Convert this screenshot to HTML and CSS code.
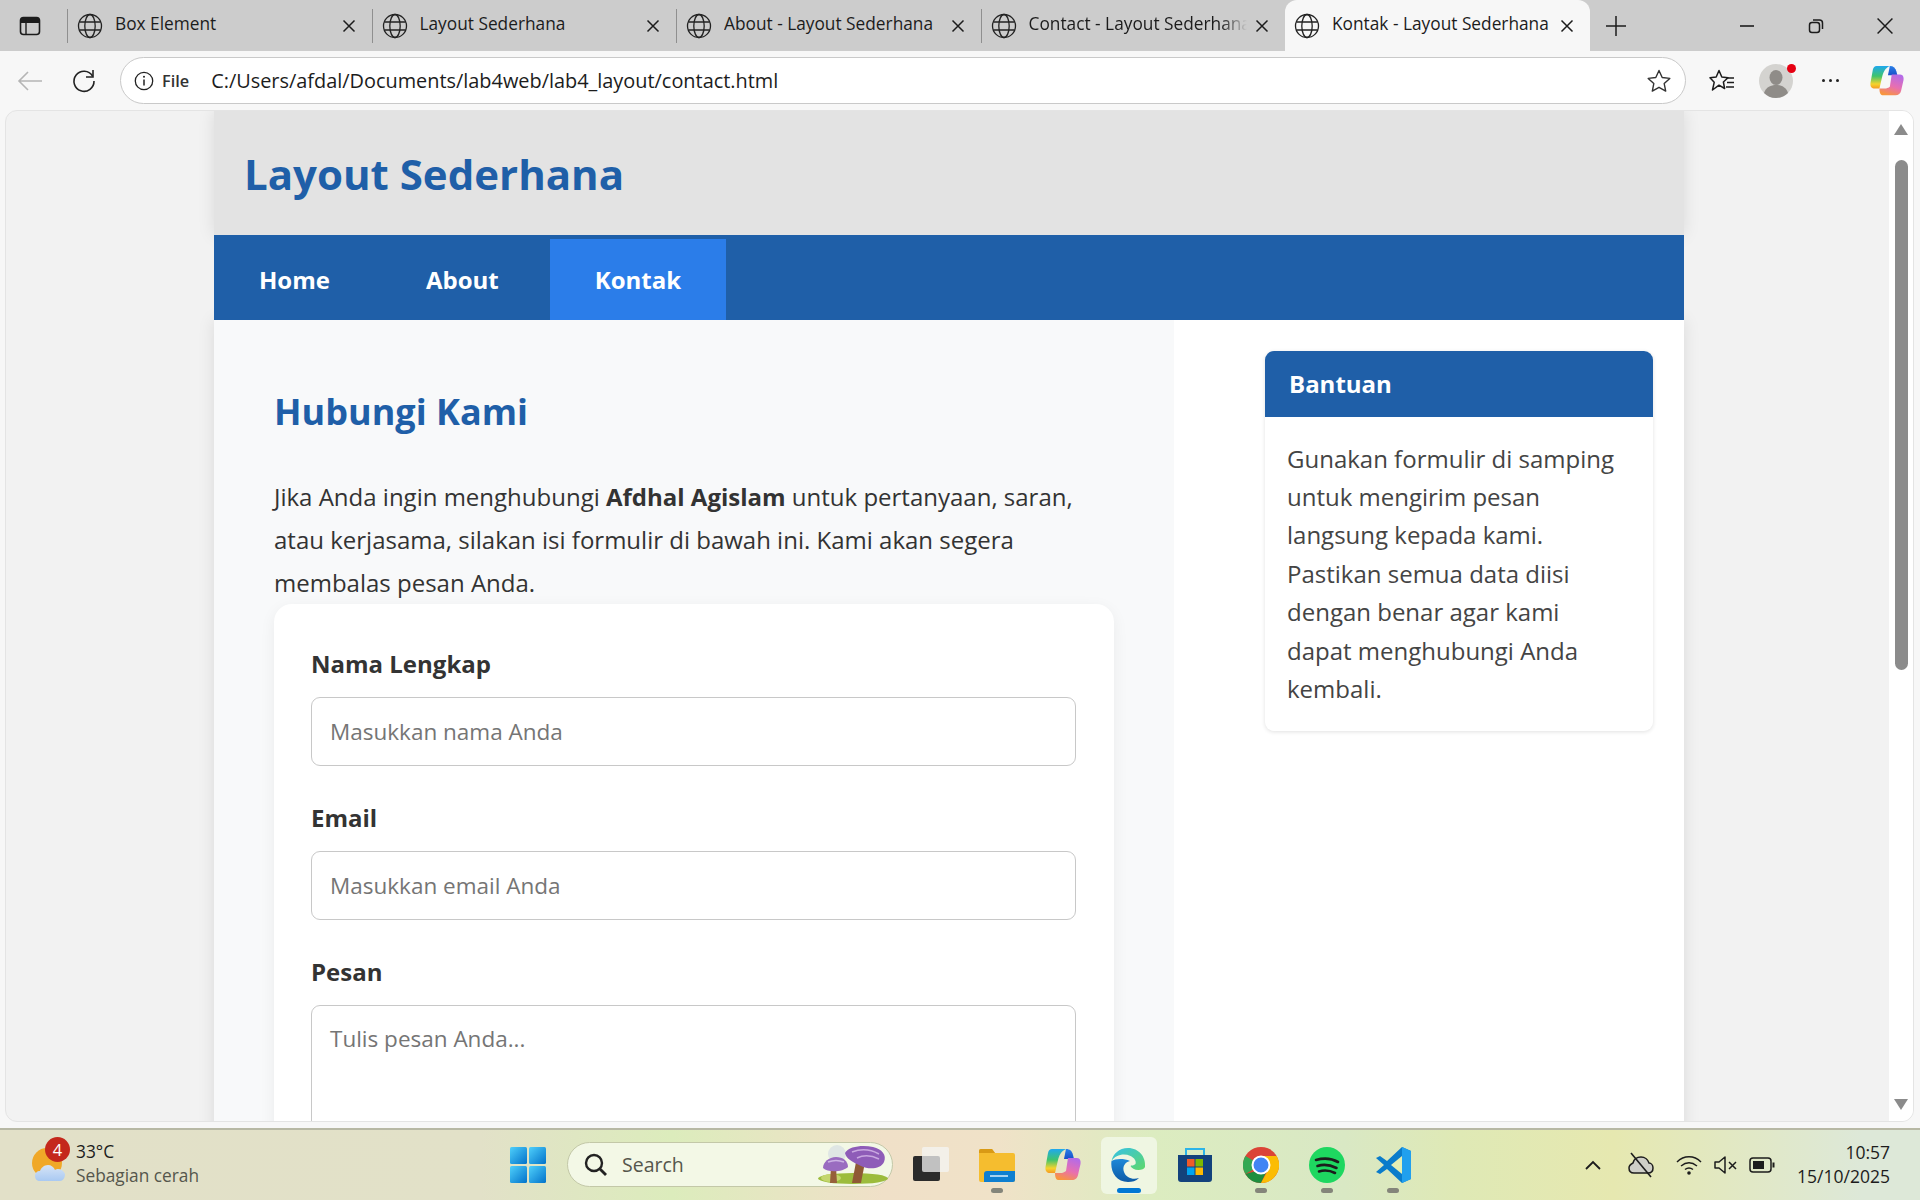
FILE: index.html
```html
<!DOCTYPE html>
<html lang="id">
<head>
    <meta charset="UTF-8">
    <title>Kontak - Layout Sederhana</title>
    <link rel="stylesheet" href="styles.css">
</head>
<body>
    <svg class="defs" width="0" height="0">
        <defs>
            <symbol id="globe" viewBox="0 0 26 26">
                <g fill="none" stroke="#222" stroke-width="1.3">
                    <circle cx="13" cy="13" r="11.5"/>
                    <ellipse cx="13" cy="13" rx="5.2" ry="11.5"/>
                    <path d="M2.4 9h21.2M2.4 17h21.2"/>
                </g>
            </symbol>
            <symbol id="cross" viewBox="0 0 14 14">
                <path d="M1.5 1.5l11 11M12.5 1.5l-11 11" fill="none" stroke="#1c1c1c" stroke-width="1.5"/>
            </symbol>
            <linearGradient id="copilotL" x1="0" y1="0" x2="0" y2="1">
                <stop offset="0" stop-color="#1fa8f0"/>
                <stop offset="0.45" stop-color="#3ec46d"/>
                <stop offset="0.8" stop-color="#f6d32d"/>
                <stop offset="1" stop-color="#f59a23"/>
            </linearGradient>
            <linearGradient id="copilotT" x1="0" y1="0" x2="0" y2="1">
                <stop offset="0" stop-color="#2a80e8"/>
                <stop offset="1" stop-color="#1a4fc8"/>
            </linearGradient>
            <linearGradient id="copilotR" x1="0.7" y1="0" x2="0.3" y2="1">
                <stop offset="0" stop-color="#b46be8"/>
                <stop offset="0.55" stop-color="#e86fb0"/>
                <stop offset="1" stop-color="#f8963c"/>
            </linearGradient>
            <linearGradient id="edgeA" x1="0" y1="0" x2="1" y2="1">
                <stop offset="0" stop-color="#35c1e8"/>
                <stop offset="1" stop-color="#5fd86a"/>
            </linearGradient>
            <linearGradient id="edgeB" x1="0" y1="0" x2="0" y2="1">
                <stop offset="0" stop-color="#1e88d8"/>
                <stop offset="1" stop-color="#0c5aa6"/>
            </linearGradient>
            <linearGradient id="startG" x1="0" y1="0" x2="1" y2="1">
                <stop offset="0" stop-color="#4fd0fb"/>
                <stop offset="1" stop-color="#0272ca"/>
            </linearGradient>
            <linearGradient id="cloudG" x1="0" y1="0" x2="0" y2="1">
                <stop offset="0" stop-color="#d6e4f6"/>
                <stop offset="1" stop-color="#a9c9f2"/>
            </linearGradient>
            <symbol id="copilot" viewBox="0 0 36 36">
                <path d="M21 2c4 0 6 2 7 6l1 4H19l2-10z" fill="url(#copilotT)"/>
                <path d="M7 2h14c-5 2-7 7-8 11l-3 13H5c-3 0-5-2-4.500-6L3 6c.5-2.500 2-4 4-4z" fill="url(#copilotL)"/>
                <path d="M23 11h9c3 0 4 3 3.500 6L33 28c-.5 3-3 5-6 5H13c-2 0-3-3-3-7h7c2-1 3-1 4-2z" fill="url(#copilotR)"/>
            </symbol>
        </defs>
    </svg>

    <div class="window">
        <div class="tabstrip">
            <div class="panel-btn">
                <svg width="22" height="22" viewBox="0 0 22 22"><rect x="1.5" y="2.5" width="19" height="17" rx="3" fill="none" stroke="#1c1c1c" stroke-width="1.6"/><path d="M2 3h18v5H2z" fill="#1c1c1c"/><path d="M7 8v11" stroke="#1c1c1c" stroke-width="1.4"/></svg>
            </div>
            <div class="tab"><svg class="globe"><use href="#globe"/></svg><span class="tab-title">Box Element</span><svg class="tab-x"><use href="#cross"/></svg></div>
            <div class="tab"><svg class="globe"><use href="#globe"/></svg><span class="tab-title">Layout Sederhana</span><svg class="tab-x"><use href="#cross"/></svg></div>
            <div class="tab"><svg class="globe"><use href="#globe"/></svg><span class="tab-title">About - Layout Sederhana</span><svg class="tab-x"><use href="#cross"/></svg></div>
            <div class="tab"><svg class="globe"><use href="#globe"/></svg><span class="tab-title tab-fade">Contact - Layout Sederhana</span><svg class="tab-x"><use href="#cross"/></svg></div>
            <div class="tab tab-active"><svg class="globe"><use href="#globe"/></svg><span class="tab-title">Kontak - Layout Sederhana</span><svg class="tab-x"><use href="#cross"/></svg></div>
            <svg class="new-tab" width="22" height="22" viewBox="0 0 22 22"><path d="M11 1v20M1 11h20" stroke="#1c1c1c" stroke-width="1.5"/></svg>
            <div class="win-btns">
                <svg width="16" height="16" viewBox="0 0 16 16"><path d="M1 8h14" stroke="#1c1c1c" stroke-width="1.6"/></svg>
                <svg width="16" height="16" viewBox="0 0 16 16"><rect x="1.5" y="4.5" width="10" height="10" rx="2.5" fill="none" stroke="#1c1c1c" stroke-width="1.5"/><path d="M5 2h6.5A3 3 0 0 1 14.500 5v6" fill="none" stroke="#1c1c1c" stroke-width="1.5"/></svg>
                <svg width="16" height="16" viewBox="0 0 14 14"><path d="M.5.5l13 13M13.500.5l-13 13" stroke="#1c1c1c" stroke-width="1.3"/></svg>
            </div>
        </div>

        <div class="toolbar">
            <svg width="28" height="24" viewBox="0 0 28 24"><path d="M26 12H3M12 3l-9 9 9 9" fill="none" stroke="#b5b5b5" stroke-width="1.6"/></svg>
            <svg class="reload" width="26" height="26" viewBox="0 0 26 26"><path d="M21.500 8A10 10 0 1 0 23 13" fill="none" stroke="#222" stroke-width="1.6"/><path d="M22 2v7h-7" fill="none" stroke="#222" stroke-width="1.6"/></svg>
            <div class="addressbar">
                <svg width="20" height="20" viewBox="0 0 20 20"><circle cx="10" cy="10" r="8.7" fill="none" stroke="#222" stroke-width="1.3"/><path d="M10 8.500v6" stroke="#222" stroke-width="1.5"/><circle cx="10" cy="5.800" r="1" fill="#222"/></svg>
                <span class="addr-file">File</span>
                <span class="addr-url">C:/Users/afdal/Documents/lab4web/lab4_layout/contact.html</span>
                <svg class="addr-star" width="26" height="26" viewBox="0 0 26 26"><path d="M13 2.500l3.200 7 7.600.9-5.600 5.200 1.500 7.500-6.700-3.800-6.700 3.800 1.500-7.500-5.600-5.200 7.600-.9z" fill="none" stroke="#333" stroke-width="1.4" stroke-linejoin="round"/></svg>
            </div>
            <svg class="tool-fav" width="26" height="26" viewBox="0 0 26 26"><path d="M10 2.500l2.800 6.500 6.200.7-4.600 4.300 1.200 6.500L10 17.200 3.500 22l1.700-7.700L1 9.700 7.200 9z" fill="none" stroke="#1c1c1c" stroke-width="1.500" stroke-linejoin="round"/><path d="M17 10h8M18 14.500h7M17 19h8" stroke="#1c1c1c" stroke-width="1.400"/></svg>
            <div class="avatar">
                <svg width="34" height="34" viewBox="0 0 34 34"><circle cx="17" cy="17" r="17" fill="#d4d3d0"/><ellipse cx="17" cy="13.500" rx="6.500" ry="7.500" fill="#8f8c88"/><path d="M5 29c2-6 7-8 12-8s10 2 12 8c-3 3-7 5-12 5s-9-2-12-5z" fill="#8f8c88"/></svg>
                <span class="avatar-dot"></span>
            </div>
            <div class="tool-dots"><i></i><i></i><i></i></div>
            <svg class="tool-copilot"><use href="#copilot"/></svg>
        </div>

        <div class="content">
            <div class="viewport">
                <div class="page">
                    <header class="site-header"><h1>Layout Sederhana</h1></header>
                    <nav class="site-nav">
                        <a href="#">Home</a>
                        <a href="#">About</a>
                        <a href="#" class="active">Kontak</a>
                    </nav>
                    <div class="columns">
                        <main class="main">
                            <h2>Hubungi Kami</h2>
                            <p>Jika Anda ingin menghubungi <strong>Afdhal Agislam</strong> untuk pertanyaan, saran, atau kerjasama, silakan isi formulir di bawah ini. Kami akan segera membalas pesan Anda.</p>
                            <form class="contact-form">
                                <label for="nama">Nama Lengkap</label>
                                <input id="nama" type="text" placeholder="Masukkan nama Anda">
                                <label for="email">Email</label>
                                <input id="email" type="email" placeholder="Masukkan email Anda">
                                <label for="pesan">Pesan</label>
                                <textarea id="pesan" placeholder="Tulis pesan Anda..."></textarea>
                            </form>
                        </main>
                        <aside class="sidebar">
                            <div class="help-card">
                                <h3>Bantuan</h3>
                                <p>Gunakan formulir di samping untuk mengirim pesan langsung kepada kami. Pastikan semua data diisi dengan benar agar kami dapat menghubungi Anda kembali.</p>
                            </div>
                        </aside>
                    </div>
                </div>
                <div class="scrollbar">
                    <span class="arrow-up"></span>
                    <span class="thumb"></span>
                    <span class="arrow-down"></span>
                </div>
            </div>
        </div>

        <div class="taskbar">
            <div class="weather">
                <div class="weather-icon">
                    <svg width="38" height="42" viewBox="0 0 38 42"><circle cx="17" cy="16" r="15" fill="#f0a828"/><path d="M10 34c-3 0-5-2-5-5s2-5 5-5c1-3 4-6 8-6 3 0 6 2 7 5 1-1 2-1 3-1 3 0 6 2 7 5 0 4-2 7-5 7z" fill="url(#cloudG)"/></svg>
                    <span class="weather-badge">4</span>
                </div>
                <div class="weather-text">
                    <span class="temp">33°C</span>
                    <span class="cond">Sebagian cerah</span>
                </div>
            </div>

            <div class="task-item">
                <svg width="36" height="36" viewBox="0 0 36 36"><rect x="0" y="0" width="17" height="17" rx="1.500" fill="url(#startG)"/><rect x="19" y="0" width="17" height="17" rx="1.500" fill="url(#startG)"/><rect x="0" y="19" width="17" height="17" rx="1.500" fill="url(#startG)"/><rect x="19" y="19" width="17" height="17" rx="1.500" fill="url(#startG)"/></svg>
            </div>
            <div class="search">
                <svg width="24" height="24" viewBox="0 0 24 24"><circle cx="10" cy="10" r="8" fill="none" stroke="#222" stroke-width="2.400"/><path d="M15.500 15.500l6.500 6.500" stroke="#222" stroke-width="2.800"/></svg>
                <span>Search</span>
                <svg class="mushrooms" width="71" height="39" viewBox="0 0 71 39">
                    <circle cx="20" cy="9" r="9" fill="#dfe6e4"/>
                    <ellipse cx="36" cy="33.500" rx="35" ry="5.500" fill="#9cbc3c"/>
                    <ellipse cx="14" cy="33" rx="10" ry="4" fill="#c4d66c"/>
                    <path d="M14 22h5l1 16h-7z" fill="#96603a"/>
                    <path d="M39 17h9l-4 21h-9z" fill="#8f5a34"/>
                    <path d="M6 23c0-6 6-11 13-11s12 4 12 10c-5 5-20 6-25 1z" fill="#9a6cc0"/>
                    <path d="M11 17c5-2 11-2 16 0" fill="none" stroke="#cdb4e4" stroke-width="1.500"/>
                    <path d="M28 8C32 1 46 0 56 2c9 2 14 8 11 15-3 7-15 8-23 4-8-4-15-7-16-13z" fill="#8e5cb8"/>
                    <path d="M35 7c8-3 18-3 27 2M40 13c6-3 14-3 22 1" fill="none" stroke="#c9a8e0" stroke-width="1.500"/>
                </svg>
            </div>
            <div class="task-item">
                <svg width="36" height="36" viewBox="0 0 36 36"><rect x="0" y="9" width="27" height="25" rx="2" fill="#2b2b2b"/><rect x="9" y="0" width="27" height="25" rx="2" fill="#f4f4f4" fill-opacity=".75"/></svg>
            </div>
            <div class="task-item task-dot">
                <svg width="36" height="34" viewBox="0 0 36 34"><path d="M0 3a2 2 0 0 1 2-2h11l3 4h18a2 2 0 0 1 2 2v25a2 2 0 0 1-2 2H2a2 2 0 0 1-2-2z" fill="#f5bd2f"/><path d="M0 3a2 2 0 0 1 2-2h11l3 4H0z" fill="#d99a15"/><path d="M5 26a3 3 0 0 1 3-3h28v9a2 2 0 0 1-2 2H5z" fill="#0f7fd0"/><path d="M11 28h18" stroke="#d8ecfb" stroke-width="1.500"/></svg>
            </div>
            <div class="task-item"><svg class="task-copilot"><use href="#copilot"/></svg></div>
            <div class="task-item task-hover">
                <svg width="36" height="36" viewBox="0 0 36 36"><path d="M34 20c1-10-6-19-17-19C8 1 2 7 .5 14c4-6 12-8 19-5 4 2 6 5 5 8-2 2-4 1-5 2 1 2 4 4 8 4 3 0 6-1 6.500-3z" fill="url(#edgeA)"/><path d="M.5 14C-1 24 5 35 17 35c4 0 8-1 11-4-6 2-13 0-15-6-2-5 1-10 6-11-7-3-15-2-18.500 0z" fill="url(#edgeB)"/></svg>
                <span class="task-indicator"></span>
            </div>
            <div class="task-item">
                <svg width="36" height="36" viewBox="0 0 36 36"><path d="M9 8V2h18v6" fill="none" stroke="#2cb4e8" stroke-width="2"/><path d="M1 8h34v24a3 3 0 0 1-3 3H4a3 3 0 0 1-3-3z" fill="#13427c"/><rect x="10" y="12" width="7.500" height="7.500" fill="#f05a28"/><rect x="18.500" y="12" width="7.500" height="7.500" fill="#7fb900"/><rect x="10" y="20.500" width="7.500" height="7.500" fill="#02a4ef"/><rect x="18.500" y="20.500" width="7.500" height="7.500" fill="#ffb901"/></svg>
            </div>
            <div class="task-item task-dot">
                <svg width="36" height="36" viewBox="0 0 36 36"><circle cx="18" cy="18" r="18" fill="#db4437"/><path d="M18 18L2.400 27A18 18 0 0 1 2.400 9z" fill="#34a853"/><path d="M2.400 27A18 18 0 0 0 18 36l7-15z" fill="#1e8e3e"/><path d="M18 9h15.600A18 18 0 0 1 18 36l7-13z" fill="#fbbc04"/><circle cx="18" cy="18" r="8.500" fill="#4285f4" stroke="#fff" stroke-width="2"/></svg>
            </div>
            <div class="task-item task-dot">
                <svg width="36" height="36" viewBox="0 0 36 36"><circle cx="18" cy="18" r="18" fill="#1ed760"/><path d="M7 13c7-2 15-2 22 2M8.500 19c6-2 13-1 19 2M10 24.500c5-1.500 11-1 16 1.500" fill="none" stroke="#1c1c1c" stroke-width="2.600" stroke-linecap="round"/></svg>
            </div>
            <div class="task-item task-dot">
                <svg width="36" height="36" viewBox="0 0 36 36"><path d="M27 0l9 4v28l-9 4-15-14-7 5-4-2 8-7-8-7 4-2 7 5z" fill="#0a7ccb"/><path d="M27 0l9 4v28l-9 4z" fill="#21a0ee"/><path d="M27 9L16 18l11 9z" fill="#e4efb4"/></svg>
            </div>

            <div class="tray">
                <svg width="16" height="10" viewBox="0 0 16 10"><path d="M1 9l7-7 7 7" fill="none" stroke="#1c1c1c" stroke-width="1.800"/></svg>
                <svg class="tray-cloud" width="26" height="26" viewBox="0 0 26 26"><path d="M6 21c-3 0-5-2-5-5s2-4 4-5c1-4 4-6 8-6s7 3 8 6c2 0 4 2 4 5s-2 5-5 5z" fill="#cfcfc8" stroke="#1c1c1c" stroke-width="1.500"/><path d="M3 1l20 24" stroke="#1c1c1c" stroke-width="1.600"/></svg>
                <svg class="tray-wifi" width="26" height="20" viewBox="0 0 26 20"><path d="M1 7c7-7 17-7 24 0M5 11c5-4 11-4 16 0M9 14.500c2.500-2 5.500-2 8 0" fill="none" stroke="#1c1c1c" stroke-width="1.500"/><circle cx="13" cy="18" r="1.800" fill="#1c1c1c"/></svg>
                <svg class="tray-vol" width="24" height="20" viewBox="0 0 24 20"><path d="M1 7h4l6-5v16l-6-5H1z" fill="none" stroke="#1c1c1c" stroke-width="1.500" stroke-linejoin="round"/><path d="M15 7l7 7M22 7l-7 7" stroke="#1c1c1c" stroke-width="1.500"/></svg>
                <svg class="tray-bat" width="26" height="18" viewBox="0 0 26 18"><rect x="1" y="2" width="21" height="14" rx="3" fill="none" stroke="#1c1c1c" stroke-width="1.500"/><rect x="4" y="5" width="11" height="8" fill="#1c1c1c"/><path d="M23.500 6.500h2v5h-2z" fill="#1c1c1c"/></svg>
                <div class="clock"><span>10:57</span><span>15/10/2025</span></div>
            </div>
        </div>
    </div>
</body>
</html>
```

FILE: styles.css
```css
*{
    box-sizing: border-box;
    margin: 0px;
    padding: 0px;
}
body{
    width: 1920px;
    height: 1200px;
    overflow: hidden;
    font-family: "Open Sans", "Noto Sans", sans-serif;
    color: #333;
}
.defs{
    position: absolute;
}
.window{
    display: flex;
    flex-direction: column;
    height: 1200px;
    background: #f7f7f7;
}

/* tabs */
.tabstrip{
    display: flex;
    align-items: center;
    height: 51px;
    background: #cccccc;
    color: #1c1c1c;
}
.panel-btn{
    display: flex;
    justify-content: center;
    width: 60px;
    margin-right: 7px;
}
.tab{
    display: flex;
    align-items: center;
    width: 304.500px;
    height: 34px;
    padding: 0 16px 0 9px;
    border-left: 1px solid #8f8f8f;
    font-size: 17.300px;
}
.globe{
    flex: none;
    width: 26px;
    height: 26px;
    margin-right: 12px;
}
.tab-title{
    flex: 1;
    margin-top: -4px;
    overflow: hidden;
    white-space: nowrap;
}
.tab-fade{
    -webkit-mask-image: linear-gradient(to right, #000 88%, transparent 100%);
    mask-image: linear-gradient(to right, #000 88%, transparent 100%);
}
.tab-x{
    flex: none;
    width: 14px;
    height: 14px;
    margin-left: 8px;
}
.tab-active{
    height: 51px;
    background: #f7f7f7;
    border-left: none;
    border-radius: 12px 12px 0 0;
}
.new-tab{
    margin-left: 15px;
}
.win-btns{
    display: flex;
    justify-content: space-between;
    width: 154px;
    margin-left: auto;
    margin-right: 27px;
}

/* address bar row */
.toolbar{
    display: flex;
    align-items: center;
    height: 59px;
    padding-left: 16px;
    background: #f7f7f7;
}
.reload{
    margin-left: 27px;
}
.addressbar{
    display: flex;
    align-items: center;
    width: 1566px;
    height: 47px;
    margin-left: 23px;
    padding: 0 13px;
    background: #fff;
    border: 1px solid #c9c9c9;
    border-radius: 24px;
    font-size: 19.900px;
}
.addr-file{
    margin-left: 8px;
    font-size: 16.300px;
    font-weight: 600;
}
.addr-url{
    margin-left: 22px;
    color: #1c1c1c;
}
.addr-star{
    margin-left: auto;
}
.tool-fav{
    margin-left: 23px;
}
.avatar{
    position: relative;
    width: 34px;
    height: 34px;
    margin-left: 24px;
}
.avatar-dot{
    position: absolute;
    top: 0px;
    right: -3px;
    width: 9px;
    height: 9px;
    background: #e60012;
    border-radius: 50%;
}
.tool-dots{
    display: flex;
    gap: 4px;
    margin-left: 29px;
}
.tool-dots i{
    width: 3px;
    height: 3px;
    background: #222;
    border-radius: 50%;
}
.tool-copilot{
    width: 34px;
    height: 34px;
    margin-left: 31px;
}

/* browser viewport */
.content{
    height: 1018px;
    padding: 0 6px 6px 5px;
}
.viewport{
    display: flex;
    height: 1012px;
    overflow: hidden;
    background: #f2f2f2;
    border: 1px solid #e4e4e4;
    border-radius: 12px;
}
.page{
    flex: 1;
    height: 1012px;
    overflow: hidden;
}
.scrollbar{
    display: flex;
    flex-direction: column;
    align-items: center;
    width: 24px;
    background: #fff;
}
.arrow-up, .arrow-down{
    width: 0px;
    height: 0px;
    border-left: 7px solid transparent;
    border-right: 7px solid transparent;
}
.arrow-up{
    margin-top: 13px;
    border-bottom: 11px solid #8b8b8b;
}
.arrow-down{
    margin-top: auto;
    margin-bottom: 11px;
    border-top: 11px solid #8b8b8b;
}
.thumb{
    width: 13px;
    height: 510px;
    margin-top: 25px;
    background: #8b8b8b;
    border-radius: 7px;
}

/* the page itself */
.site-header, .site-nav, .columns{
    width: 1470px;
    margin-left: 208px;
}
.site-header{
    height: 124px;
    padding: 35px 30px 0;
    background: #e3e3e3;
    box-shadow: 0 0 16px rgba(0,0,0,0.1);
}
.site-header h1{
    font-size: 42px;
    line-height: 56px;
    font-weight: 700;
    color: #1f5fa8;
}
.site-nav{
    display: flex;
    align-items: flex-end;
    gap: 6px;
    height: 85px;
    background: #1f5fa8;
    position: relative;
}
.site-nav a{
    display: flex;
    align-items: center;
    justify-content: center;
    height: 81px;
    padding: 0 45px;
    font-size: 24px;
    font-weight: 700;
    color: #fff;
    text-decoration: none;
}
.site-nav a.active{
    background: #2b7de9;
}
.columns{
    display: flex;
    background: #fff;
    height: 900px;
    box-shadow: 0 0 16px rgba(0,0,0,0.1);
}
.main{
    width: 960px;
    padding: 68px 60px 0;
    background: #f8f9fa;
}
.main h2{
    font-size: 36px;
    line-height: 48px;
    font-weight: 700;
    color: #1f5fa8;
}
.main p{
    margin-top: 39px;
    font-size: 24px;
    line-height: 43px;
    color: #333;
}
.contact-form{
    display: flex;
    flex-direction: column;
    height: 700px;
    padding: 42px 38px 0 37px;
    background: #fff;
    border-radius: 18px;
    box-shadow: 0 4px 16px rgba(0,0,0,0.06);
}
.contact-form label{
    font-size: 24px;
    line-height: 36px;
    font-weight: 700;
    color: #333;
}
.contact-form input, .contact-form textarea{
    width: 100%;
    height: 69px;
    margin: 15px 0 34px;
    padding: 0 18px;
    font-family: inherit;
    font-size: 22.500px;
    color: #333;
    background: #fff;
    border: 1px solid #c8c8c8;
    border-radius: 9px;
    resize: none;
}
.contact-form textarea{
    height: 180px;
    padding-top: 17px;
}
.contact-form ::placeholder{
    color: #757575;
}
.sidebar{
    flex: 1;
    padding: 31px 31px 0 91px;
}
.help-card{
    height: 380px;
    background: #fff;
    border-radius: 9px;
    box-shadow: 0 1px 4px rgba(0,0,0,0.12);
    overflow: hidden;
}
.help-card h3{
    height: 66px;
    padding: 0 24px;
    font-size: 24px;
    line-height: 66px;
    font-weight: 700;
    color: #fff;
    background: #1f5fa8;
}
.help-card p{
    padding: 22.600px 35px 0 22px;
    font-size: 24px;
    line-height: 38.400px;
    color: #444;
}

/* windows taskbar */
.taskbar{
    display: flex;
    align-items: center;
    height: 72px;
    background: linear-gradient(to right, #e2e0c8 0%, #e2e1c8 25%, #dcecbc 35%, #f0e0c8 46%, #f0e2c8 52%, #dcecc0 60%, #d9e8c4 70%, #dfe9b5 76%, #e6e8b0 84%, #dde8d8 97%);
    border-top: 2px solid #b7b8a4;
}
.weather{
    display: flex;
    width: 500px;
    padding-left: 30px;
    align-items: center;
}
.weather-icon{
    position: relative;
    width: 38px;
    height: 42px;
    margin-top: 6px;
}
.weather-badge{
    position: absolute;
    top: -10px;
    right: -2px;
    width: 25px;
    height: 25px;
    font-size: 16.500px;
    line-height: 25px;
    text-align: center;
    color: #fff;
    background: #c4281c;
    border-radius: 50%;
}
.weather-text{
    display: flex;
    flex-direction: column;
    margin-top: -2px;
    margin-left: 8px;
    font-size: 17.300px;
    line-height: 24px;
}
.temp{
    color: #1c1c1c;
}
.cond{
    color: #55564c;
}
.task-item{
    position: relative;
    display: flex;
    flex: none;
    align-items: center;
    justify-content: center;
    width: 56px;
    height: 57px;
    margin-right: 10px;
    border-radius: 6px;
}
.task-hover{
    background: #eff6e2;
}
.task-dot::after{
    content: "";
    position: absolute;
    bottom: 1px;
    left: 22px;
    width: 12px;
    height: 5px;
    background: #84857a;
    border-radius: 3px;
}
.task-indicator{
    position: absolute;
    bottom: 1px;
    left: 16px;
    width: 24px;
    height: 5px;
    background: #0078d4;
    border-radius: 3px;
}
.task-copilot{
    width: 36px;
    height: 36px;
}
.search{
    display: flex;
    flex: none;
    align-items: center;
    width: 326px;
    height: 45px;
    margin-top: -1px;
    margin-left: 1px;
    margin-right: 10px;
    padding-left: 16px;
    background: #f3f8e6;
    border: 1px solid #c3c8a8;
    border-radius: 23px;
    font-size: 19.500px;
    color: #55564c;
}
.search span{
    margin-left: 14px;
}
.mushrooms{
    margin-left: auto;
    margin-right: 4px;
}
.tray{
    display: flex;
    flex: 1;
    align-items: center;
    padding-right: 30px;
    margin-left: 154px;
}
.tray-cloud{
    margin-left: 27px;
}
.tray-wifi{
    margin-left: 22px;
}
.tray-vol{
    margin-left: 12px;
}
.tray-bat{
    margin-left: 11px;
}
.clock{
    display: flex;
    flex-direction: column;
    align-items: flex-end;
    margin-top: -2px;
    margin-left: auto;
    font-size: 17.500px;
    line-height: 24px;
    color: #1c1c1c;
}
```
